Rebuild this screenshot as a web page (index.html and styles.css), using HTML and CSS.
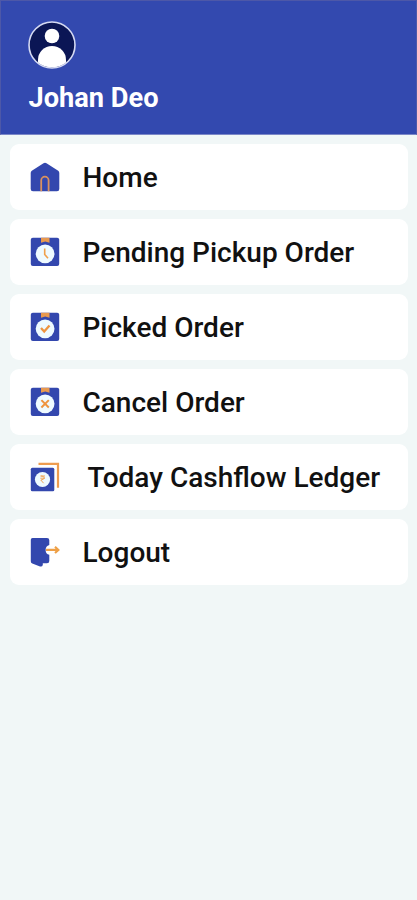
FILE: index.html
```html
<!DOCTYPE html>
<html lang="en">
<head>
<meta charset="utf-8">
<meta name="viewport" content="width=device-width, initial-scale=1">
<title>Menu</title>
<link rel="stylesheet" href="styles.css">
</head>
<body>
<header class="profile">
  <svg class="avatar" viewBox="0 0 48 48">
    <defs><clipPath id="face"><circle cx="24" cy="24" r="22.5"/></clipPath></defs>
    <circle cx="24" cy="24" r="23" fill="#0b1655"/>
    <g clip-path="url(#face)" fill="#fff"><circle cx="24" cy="15" r="7.300"/><path d="M10 48V39a14 14 0 0 1 28 0v9z"/></g>
    <circle cx="24" cy="24" r="23" fill="none" stroke="#d5daf2" stroke-width="1.6"/>
  </svg>
  <h1 class="name">Johan Deo</h1>
</header>
<nav class="menu">
  <a class="item">
    <svg class="icon" viewBox="0 0 30 30">
      <path d="M13.500 1.300Q15 .2 16.500 1.300L28.200 8.700Q29.300 9.500 29.300 11V27Q29.300 29.300 27 29.300H3Q.7 29.300 .7 27V11Q.7 9.500 1.800 8.700Z" fill="#3347ae"/>
      <path d="M11.200 29.300V18.400a3.700 3.700 0 0 1 7.400 0v10.900" fill="none" stroke="#d9915f" stroke-width="1.800"/>
    </svg>
    <span class="label">Home</span>
  </a>
  <a class="item">
    <svg class="icon" viewBox="0 0 30 30">
      <rect x=".8" y=".7" width="28.400" height="28.300" rx="2" fill="#3347ae"/>
      <path d="M11 .7h8.500v5l-4.250-1.300L11 5.700z" fill="#e8994f"/>
      <circle cx="15.100" cy="16.800" r="9.400" fill="#eefaff"/>
      <path d="M14.700 11.500v6l3.300 3.800" fill="none" stroke="#f0a04b" stroke-width="1.600"/>
    </svg>
    <span class="label">Pending Pickup Order</span>
  </a>
  <a class="item">
    <svg class="icon" viewBox="0 0 30 30">
      <rect x=".8" y=".7" width="28.400" height="28.300" rx="2" fill="#3347ae"/>
      <path d="M11 .7h8.500v5l-4.250-1.300L11 5.700z" fill="#e8994f"/>
      <circle cx="15.100" cy="16.800" r="9.400" fill="#eefaff"/>
      <path d="M11 16l3.200 3.500 5.300-6" fill="none" stroke="#ee9440" stroke-width="2.300"/>
    </svg>
    <span class="label">Picked Order</span>
  </a>
  <a class="item">
    <svg class="icon" viewBox="0 0 30 30">
      <rect x=".8" y=".7" width="28.400" height="28.300" rx="2" fill="#3347ae"/>
      <path d="M11 .7h8.500v5l-4.250-1.300L11 5.700z" fill="#e8994f"/>
      <circle cx="15.100" cy="16.800" r="9.400" fill="#eefaff"/>
      <path d="M11.400 13.100l7.400 7.400m0-7.400l-7.400 7.400" fill="none" stroke="#ee9440" stroke-width="2"/>
    </svg>
    <span class="label">Cancel Order</span>
  </a>
  <a class="item item-ledger">
    <svg class="icon" viewBox="0 0 30 30">
      <path d="M8.500 1.800h19.500v24" fill="none" stroke="#ee9c50" stroke-width="2.200"/>
      <rect x=".8" y="5.800" width="23.500" height="23.500" rx="1.500" fill="#3347ae"/>
      <circle cx="12.500" cy="17.500" r="7.600" fill="#eefaff"/>
      <path d="M10.300 14h4.700M10.300 16.200h4.700M11 14q3.200 0 3.200 1.800 0 2-3.400 2.200l2.800 3.200" fill="none" stroke="#efa658" stroke-width="1"/>
    </svg>
    <span class="label">Today Cashflow Ledger</span>
  </a>
  <a class="item">
    <svg class="icon" viewBox="0 0 30 30">
      <path d="M2.500 1H17q2.300 0 2.300 2.300V8a5.100 5.100 0 0 0 0 9.800V24q0 2.300-2.300 2.300h-4.200v1.600q-.6 2.100-2.800 1.500L2.300 26.500Q.8 26 .8 24.300V2.700Q.8 1 2.500 1z" fill="#3347ae"/>
      <path d="M16 12.900h11.500M25 9.800l3.400 3.100-3.400 3.100" fill="none" stroke="#eea047" stroke-width="2.100"/>
    </svg>
    <span class="label">Logout</span>
  </a>
</nav>
</body>
</html>
```
FILE: styles.css
```css
* { box-sizing: border-box; }

body {
  margin: 0;
  min-height: 100vh;
  background: #f1f7f7;
  font-family: Roboto, sans-serif;
}

.profile {
  height: 135px;
  padding: 20px 27px 0;
  background: #3349af;
  border: 1px solid #4d58a8;
  border-bottom-color: #7b87c7;
}

.avatar {
  display: block;
  width: 48px;
  height: 48px;
}

.name {
  margin: 13px 0 0 0.5px;
  font-size: 27.2px;
  line-height: 32px;
  font-weight: 700;
  color: #fff;
}

.menu {
  display: flex;
  flex-direction: column;
  gap: 9px;
  padding: 9px 9px 0 10px;
}

.item {
  display: flex;
  align-items: center;
  gap: 22.5px;
  height: 66px;
  padding-left: 20px;
  background: #fff;
  border-radius: 9px;
}

.item-ledger { gap: 27.5px; }

.icon {
  flex: none;
  width: 30px;
  height: 30px;
}

.label {
  padding-top: 2px;
  font-size: 28px;
  line-height: 34px;
  font-weight: 500;
  color: #111;
  white-space: nowrap;
}
```
